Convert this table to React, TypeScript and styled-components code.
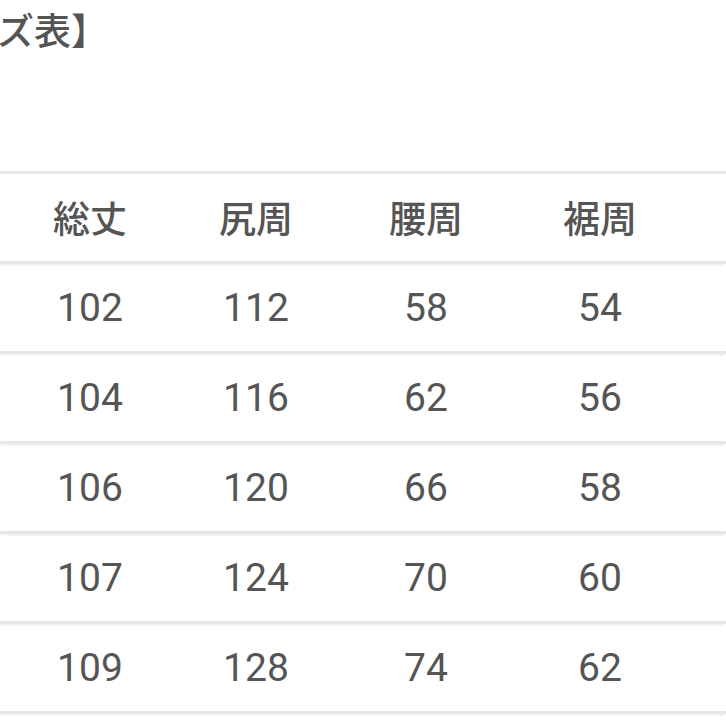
import styled, { createGlobalStyle } from "styled-components";

type Row = {
  length: string;
  hip: string;
  waist: string;
  hem: string;
};

const rows: Row[] = [
  { length: "102", hip: "112", waist: "58", hem: "54" },
  { length: "104", hip: "116", waist: "62", hem: "56" },
  { length: "106", hip: "120", waist: "66", hem: "58" },
  { length: "107", hip: "124", waist: "70", hem: "60" },
  { length: "109", hip: "128", waist: "74", hem: "62" },
];

const GlobalStyle = createGlobalStyle`
  html, body {
    margin: 0;
    padding: 0;
    background: #ffffff;
    overflow: hidden;
  }
  body {
    font-family: "Noto Sans CJK JP", "Noto Sans", sans-serif;
    color: #555555;
  }
`;

const Page = styled.div`
  width: 726px;
  height: 726px;
  overflow: hidden;
  background: #ffffff;
`;

/* the title is cut off at the left edge in the picture */
const Title = styled.h2`
  margin: 0 0 0 -113px;
  padding-top: 4px;
  height: 51px;
  font-size: 37px;
  font-weight: 500;
  line-height: 51px;
  color: #555555;
  white-space: nowrap;
`;

const Table = styled.div`
  margin-top: 116px;
  border-top: 3px solid #e6e6e6;
`;

const TableRow = styled.div`
  display: grid;
  grid-template-columns: 180px 152px 188px 160px 1fr;
  height: 87px;
  align-items: center;
  border-bottom: 3px solid #e6e6e6;
  box-shadow: 0 3px 0 -1px #f3f3f3;
`;

const Cell = styled.div<{ $head?: boolean }>`
  text-align: center;
  font-family: ${(p) =>
    p.$head
      ? `"Noto Sans CJK JP", sans-serif`
      : `Roboto, "Noto Sans", sans-serif`};
  font-size: ${(p) => (p.$head ? "37px" : "39px")};
  font-weight: ${(p) => (p.$head ? 500 : 400)};
  color: #555555;
  line-height: 1;
  padding-top: ${(p) => (p.$head ? "0" : "2px")};
`;

const App = () => {
  return (
    <Page>
      <GlobalStyle />
      <Title>【サイズ表】</Title>
      <Table>
        <TableRow>
          <Cell $head>総丈</Cell>
          <Cell $head>尻周</Cell>
          <Cell $head>腰周</Cell>
          <Cell $head>裾周</Cell>
          <Cell />
        </TableRow>
        {rows.map((r) => (
          <TableRow key={r.length}>
            <Cell>{r.length}</Cell>
            <Cell>{r.hip}</Cell>
            <Cell>{r.waist}</Cell>
            <Cell>{r.hem}</Cell>
            <Cell />
          </TableRow>
        ))}
      </Table>
    </Page>
  );
};

export default App;
